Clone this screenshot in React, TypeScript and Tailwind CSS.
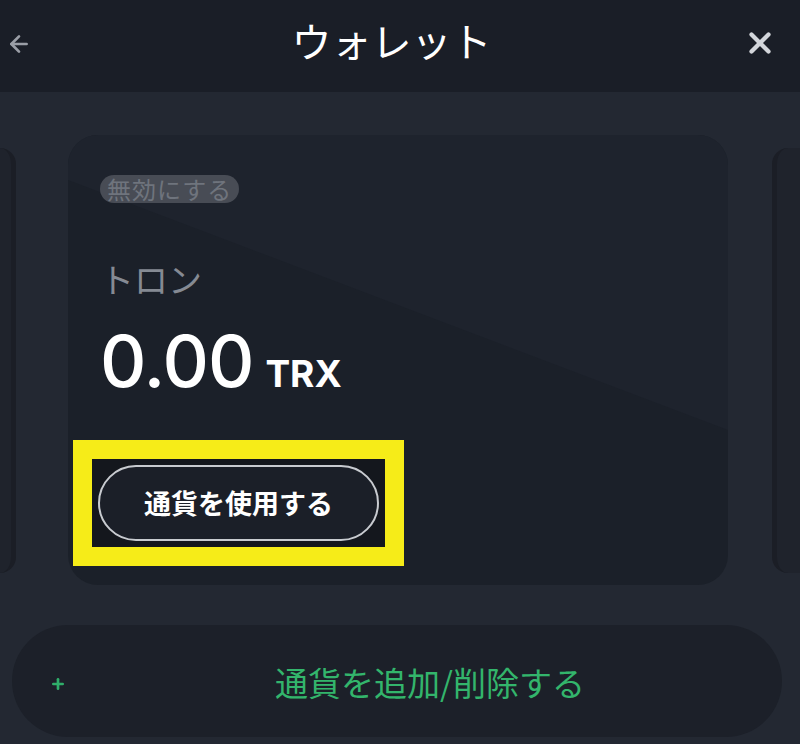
import { ArrowLeft, X, Plus } from "lucide-react";

const jp = { fontFamily: '"Noto Sans CJK JP", "Noto Sans", sans-serif' };
const num = { fontFamily: 'Inter, "Noto Sans", sans-serif' };

function WalletCard() {
    return (
        <div className="relative w-[660px] h-[450px] shrink-0 rounded-[30px] bg-[#1b2029] overflow-hidden">
            {/* faint diagonal shade */}
            <svg className="absolute inset-0 w-full h-full pointer-events-none" viewBox="0 0 660 450" preserveAspectRatio="none">
                <polygon points="0,0 660,0 660,295 0,45" fill="#1e232d" />
            </svg>

            <div className="relative flex flex-col pl-[32px] pt-[40px]">
                <span className="w-fit rounded-full bg-[#484c55] px-[7px] h-[28px] leading-[28px] text-[24px] tracking-[1px] text-[#6f747d]" style={jp}>
                    無効にする
                </span>

                <div className="mt-[52px] text-[34px] leading-[48px] text-[#858a93]" style={jp}>
                    トロン
                </div>

                <div className="mt-[22px] flex items-baseline gap-[12px] text-white" style={num}>
                    <span className="text-[72px] leading-[72px] font-medium tracking-[-1px]">0.00</span>
                    <span className="text-[37px] leading-[40px] font-bold">TRX</span>
                </div>

                <div className="mt-[43px] -ml-[27px] w-[331px] h-[126px] border-[19px] border-[#f6ec18] bg-[#14171d] p-[6px]">
                    <button className="w-full h-full rounded-full border-2 border-[#c8cbd0] bg-[#1b1f28] text-white text-[27px] font-bold" style={jp}>
                        通貨を使用する
                    </button>
                </div>
            </div>
        </div>
    );
}

export default function App() {
    return (
        <div className="w-[800px] h-[744px] bg-[#232832] flex flex-col overflow-hidden">
            <header className="h-[92px] shrink-0 bg-[#1a1e27] flex items-start justify-between pl-[6px] pt-[14px]">
                <ArrowLeft className="mt-[17px] w-[26px] h-[26px] text-[#9a9ea6]" strokeWidth={2.5} />
                <h1 className="text-[40px] leading-[52px] text-white pl-[8px]" style={jp}>ウォレット</h1>
                <X className="mt-[12px] w-[34px] h-[34px] text-[#d3d6db] mr-[23px]" strokeWidth={3} />
            </header>

            <div className="mt-[43px] flex items-center h-[450px]">
                <div className="w-[16px] h-[425px] shrink-0 rounded-r-[16px] bg-[#1f232c] border-r-[5px] border-[#1b1e26]" />
                <div className="w-[52px] shrink-0" />
                <WalletCard />
                <div className="w-[44px] shrink-0" />
                <div className="w-[28px] h-[425px] shrink-0 rounded-l-[16px] bg-[#1f232c] border-l-[5px] border-[#1b1e26]" />
            </div>

            <div className="mt-[40px] mx-[12px] w-[770px] h-[112px] rounded-full bg-[#1c2029] flex items-center px-[38px]">
                <Plus className="mt-[6px] w-[16px] h-[16px] text-[#2fae6a]" strokeWidth={4} />
                <span className="flex-1 text-center text-[33px] text-[#33b56c] pl-[50px] mt-[4px]" style={jp}>
                    通貨を追加/削除する
                </span>
            </div>
        </div>
    );
}
